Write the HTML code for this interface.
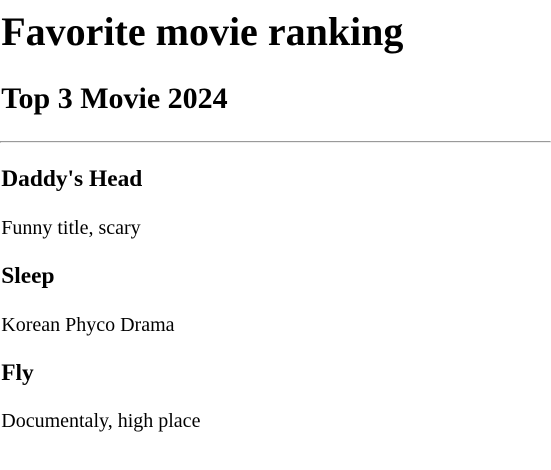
<!DOCTYPE html>
<html><head><meta charset="utf-8"><style>
html{zoom:1.25;}
body{margin:0;padding-left:1px;font-family:"Liberation Serif",serif;color:#000;background:#fff;}
hr{margin-left:-1px;}
h1{margin-top:6.6px;}
</style></head><body>
<h1>Favorite movie ranking</h1>
<h2>Top 3 Movie 2024</h2>
<hr>
<h3>Daddy's Head</h3>
<p>Funny title, scary</p>
<h3>Sleep</h3>
<p>Korean Phyco Drama</p>
<h3>Fly</h3>
<p>Documentaly, high place</p>
</body></html>
